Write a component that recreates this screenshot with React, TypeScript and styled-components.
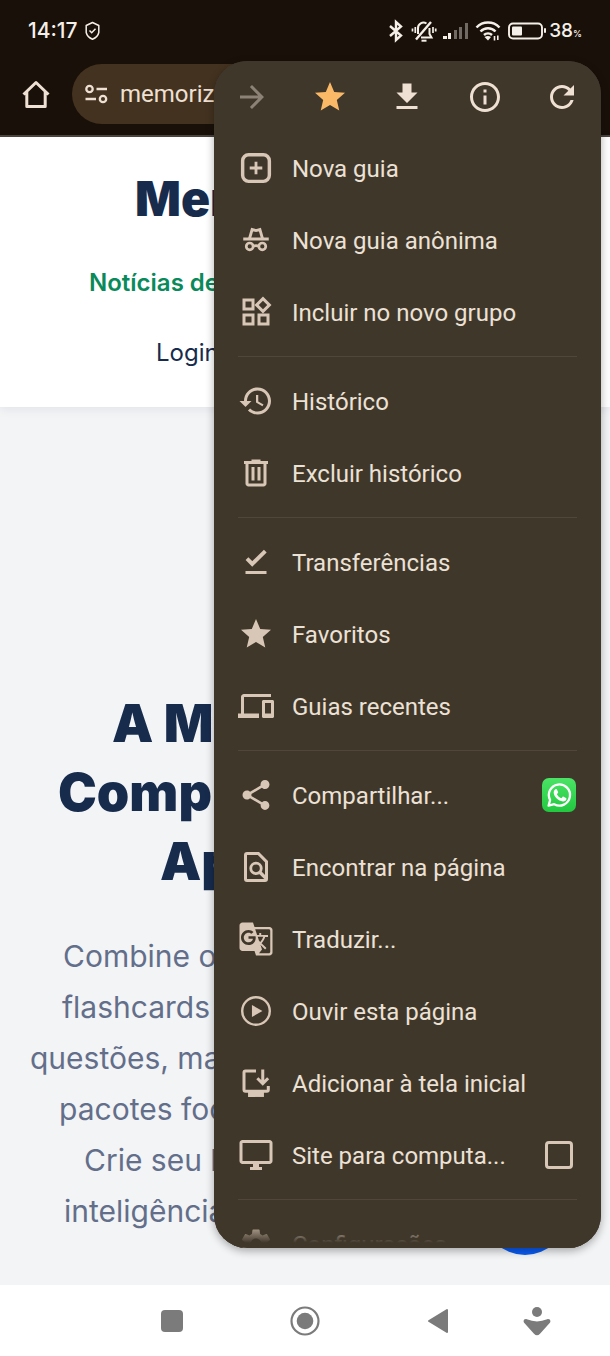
import React from "react";
import styled, { createGlobalStyle } from "styled-components";

const color = {
  chrome: "#191009",
  pill: "#43321f",
  menu: "#40372b",
  menuText: "#ece1d5",
  menuIcon: "#d8c7b6",
  toolIcon: "#eee0d3",
  navy: "#172b4d",
  green: "#0a8a5b",
  slate: "#636f8a",
  page: "#f3f4f6",
  navIcon: "#7b7b7b",
};

const GlobalStyle = createGlobalStyle`
  * { box-sizing: border-box; }
  body { margin: 0; background: #fff; font-family: Inter, "Liberation Sans", sans-serif; }
  button { font: inherit; border: 0; padding: 0; background: none; cursor: pointer; }
  h1, h2, p, ul { margin: 0; padding: 0; list-style: none; }
`;

const Screen = styled.div`
  position: relative;
  display: flex;
  flex-direction: column;
  min-height: 100vh;
  overflow: hidden;
`;

const StatusBar = styled.div`
  display: flex;
  align-items: center;
  justify-content: space-between;
  height: 61px;
  padding: 0 28px;
  background: ${color.chrome};
  color: #f5efe9;
`;

const StatusGroup = styled.div<{ $gap: number }>`
  display: flex;
  align-items: center;
  gap: ${(p) => p.$gap}px;
`;

const Clock = styled.span`
  font-size: 21px;
  font-weight: 500;
`;

const Charge = styled.span`
  font-size: 19px;
  font-weight: 500;
  small { font-size: 9px; }
`;

const BrowserBar = styled.div`
  display: flex;
  align-items: center;
  gap: 18px;
  height: 76px;
  padding: 0 0 8px 18px;
  background: ${color.chrome};
  border-bottom: 2px solid #4b453e;
  color: ${color.toolIcon};
`;

const IconButton = styled.button`
  display: flex;
  align-items: center;
  justify-content: center;
  width: 36px;
  height: 36px;
  color: inherit;
`;

const AddressPill = styled.div`
  display: flex;
  align-items: center;
  gap: 10px;
  flex: 1;
  height: 60px;
  margin-right: 72px;
  padding-left: 10px;
  border-radius: 30px;
  background: ${color.pill};
`;

const Address = styled.input`
  width: 100px;
  padding: 0;
  border: 0;
  outline: 0;
  background: none;
  color: ${color.toolIcon};
  font-family: Roboto, sans-serif;
  font-size: 24px;
`;

const Site = styled.main`
  position: relative;
  flex: 1;
  background: ${color.page};
`;

const SiteHeader = styled.header`
  height: 270px;
  padding-top: 32px;
  background: #fff;
  box-shadow: 0 2px 10px rgba(20, 30, 50, 0.08);
`;

const Line = styled.span<{ $start: number }>`
  display: block;
  padding-left: ${(p) => p.$start}px;
  white-space: nowrap;
`;

const Brand = styled.h1`
  font-size: 48px;
  font-weight: 900;
  line-height: 60px;
  color: ${color.navy};
`;

const SiteLink = styled.a<{ $strong?: boolean }>`
  display: block;
  margin-top: 38px;
  font-size: 24px;
  font-weight: ${(p) => (p.$strong ? 600 : 400)};
  line-height: 32px;
  color: ${(p) => (p.$strong ? color.green : color.navy)};
  text-decoration: none;
`;

const Hero = styled.section`
  padding-top: 282px;
`;

const HeroTitle = styled.h2`
  font-size: 52px;
  font-weight: 900;
  line-height: 69px;
  color: ${color.navy};
`;

const HeroText = styled.p`
  margin-top: 35px;
  font-size: 30px;
  line-height: 51px;
  color: ${color.slate};
`;

const Fab = styled.button`
  position: absolute;
  right: 43px;
  bottom: 30px;
  width: 84px;
  height: 84px;
  border-radius: 50%;
  background: #0b5cf5;
`;

const Menu = styled.div`
  position: absolute;
  top: 61px;
  right: 9px;
  bottom: 108px;
  width: calc(100% - 223px);
  max-width: 387px;
  overflow: hidden;
  border-radius: 33px;
  background: ${color.menu};
  color: ${color.menuText};

  &::after {
    content: "";
    position: absolute;
    inset: auto 0 0 0;
    height: 26px;
    background: linear-gradient(rgba(64, 55, 43, 0), ${color.menu} 80%);
    pointer-events: none;
  }
`;

const MenuShadow = styled(Menu)`
  overflow: visible;
  box-shadow: 0 3px 8px rgba(0, 0, 0, 0.32);
  &::after { display: none; }
`;

const MenuTools = styled.div`
  display: flex;
  align-items: center;
  justify-content: space-between;
  height: 71px;
  padding: 0 21px 0 20px;
`;

const ToolButton = styled(IconButton)<{ $tone: string }>`
  color: ${(p) => p.$tone};
`;

const MenuRow = styled.li`
  display: flex;
  align-items: center;
  height: 72px;
  padding: 0 25px 0 24px;
`;

const MenuAction = styled.button`
  display: flex;
  flex: 1;
  align-items: center;
  gap: 18px;
  height: 100%;
  color: ${color.menuText};
  text-align: left;
`;

const MenuLabel = styled.span`
  padding-top: 1px;
  font-family: Roboto, sans-serif;
  font-size: 24px;
  line-height: 32px;
  white-space: nowrap;
`;

const MenuGlyph = styled.span`
  display: flex;
  color: ${color.menuIcon};
`;

const Divider = styled.li`
  height: 1px;
  margin: 8px 24px;
  background: #50473a;
`;

const Tick = styled.input`
  appearance: none;
  width: 28px;
  height: 28px;
  margin: 0 3px 0 0;
  border: 3px solid ${color.menuIcon};
  border-radius: 4px;
`;

const NavBar = styled.nav`
  display: grid;
  grid-template-columns: repeat(3, 133px) 64px;
  justify-content: center;
  align-items: center;
  height: 71px;
  padding-left: 64px;
  background: #fff;
`;

const NavButton = styled(IconButton)`
  justify-self: center;
  color: ${color.navIcon};
`;

const Glyph = ({ d, size = 36 }: { d: string; size?: number }) => (
  <svg width={size} height={size} viewBox="0 0 24 24" fill="currentColor" aria-hidden="true">
    <path fillRule="evenodd" d={d} />
  </svg>
);

const Sketch = ({ children }: { children: React.ReactNode }) => (
  <svg width="36" height="36" viewBox="0 0 24 24" fill="none" stroke="currentColor" strokeWidth="2" aria-hidden="true">
    {children}
  </svg>
);

const STAR = "M12 17.27L18.18 21l-1.64-7.03L22 9.24l-7.19-.61L12 2 9.19 8.63 2 9.24l5.46 4.73L5.82 21z";

const tools = [
  { label: "Avançar", tone: "#8d8276", d: "M12 4l-1.41 1.41L16.17 11H4v2h12.17l-5.58 5.59L12 20l8-8z" },
  { label: "Favorito", tone: "#f9b966", d: STAR },
  { label: "Baixar", tone: color.toolIcon, d: "M19 9h-4V3H9v6H5l7 7 7-7zM5 18v2h14v-2H5z" },
  {
    label: "Informações",
    tone: color.toolIcon,
    d: "M11 7h2v2h-2zm0 4h2v6h-2zm1-9C6.48 2 2 6.48 2 12s4.48 10 10 10 10-4.48 10-10S17.52 2 12 2zm0 18c-4.41 0-8-3.59-8-8s3.59-8 8-8 8 3.59 8 8-3.59 8-8 8z",
  },
  {
    label: "Recarregar",
    tone: color.toolIcon,
    d: "M17.65 6.35C16.2 4.9 14.21 4 12 4c-4.42 0-7.99 3.58-7.99 8s3.57 8 7.99 8c3.73 0 6.84-2.55 7.73-6h-2.08c-.82 2.33-3.04 4-5.65 4-3.31 0-6-2.69-6-6s2.69-6 6-6c1.66 0 3.14.69 4.22 1.78L13 11h7V4l-2.35 2.35z",
  },
];

const WhatsApp = () => (
  <svg width="34" height="34" viewBox="0 0 34 34" role="img" aria-label="WhatsApp">
    <defs>
      <linearGradient id="wa" x1="0" y1="0" x2="0" y2="1">
        <stop offset="0" stopColor="#4be366" />
        <stop offset="1" stopColor="#22c840" />
      </linearGradient>
    </defs>
    <rect width="34" height="34" rx="7" fill="url(#wa)" />
    <path d="M6.6 27.6l1.5-5.6A10.6 10.6 0 1 1 12.2 26.2z" fill="none" stroke="#fff" strokeWidth="2.3" strokeLinejoin="round" />
    <path
      d="M13.3 11.3c.5-.5 1.3-.5 1.6.1l1.2 2.5c.2.5 0 .9-.3 1.2l-.9 1.1c1 1.9 2.4 3.2 4.4 4.1l1.2-1.4c.3-.4.7-.4 1.1-.2l2.4 1.2c.5.3.6.7.4 1.3-.5 1.5-2 2.3-3.5 2.2-4.7-.7-8.6-4.3-9.2-8.5-.1-1.5.6-2.7 1.6-3.6z"
      fill="#fff"
    />
  </svg>
);

type Item = { label: string; icon: React.ReactNode; side?: React.ReactNode };

const groups: Item[][] = [
  [
    {
      label: "Nova guia",
      icon: (
        <Sketch>
          <rect x="3.1" y="3.1" width="17.8" height="17.8" rx="4" strokeWidth="2.3" />
          <path d="M12 7.8v8.400M7.800 12h8.400" strokeWidth="1.9" />
        </Sketch>
      ),
    },
    {
      label: "Nova guia anônima",
      icon: (
        <Sketch>
          <path d="M3.500 11.300h17" strokeWidth="1.900" />
          <path d="M7.700 11l1.700-6 2.600.7 2.600-.7 1.700 6" strokeWidth="1.900" />
          <circle cx="7.800" cy="16.300" r="2.300" strokeWidth="1.800" />
          <circle cx="16.200" cy="16.300" r="2.300" strokeWidth="1.800" />
          <path d="M10 16.200q2-1 4 0" strokeWidth="1.800" />
        </Sketch>
      ),
    },
    {
      label: "Incluir no novo grupo",
      icon: (
        <Glyph d="M16.660 4.520l2.830 2.830-2.830 2.830-2.830-2.830 2.830-2.830M9 5v4H5V5h4m10 10v4h-4v-4h4M9 15v4H5v-4h4m7.660-13.310L11 7.340 16.660 13l5.660-5.660-5.660-5.650zM11 3H3v8h8V3zm10 10h-8v8h8v-8zm-10 0H3v8h8v-8z" />
      ),
    },
  ],
  [
    {
      label: "Histórico",
      icon: (
        <Glyph d="M13 3c-4.970 0-9 4.030-9 9H1l3.890 3.890.07.14L9 12H6c0-3.870 3.130-7 7-7s7 3.130 7 7-3.130 7-7 7c-1.930 0-3.680-.79-4.940-2.060l-1.420 1.420C8.270 19.990 10.510 21 13 21c4.970 0 9-4.030 9-9s-4.030-9-9-9zm-1 5v5l4.280 2.540.72-1.210-3.500-2.080V8H12z" />
      ),
    },
    {
      label: "Excluir histórico",
      icon: (
        <Glyph d="M15 4V3H9v1H4v2h1v13c0 1.100.9 2 2 2h10c1.100 0 2-.9 2-2V6h1V4h-5zm2 15H7V6h10v13zM9 8h2v9H9zm4 0h2v9h-2z" />
      ),
    },
  ],
  [
    {
      label: "Transferências",
      icon: (
        <Sketch>
          <path d="M6 9.800l3.500 3.500L18.200 4.800" strokeWidth="2.600" />
          <path d="M5 19h14" />
        </Sketch>
      ),
    },
    { label: "Favoritos", icon: <Glyph d={STAR} /> },
    {
      label: "Guias recentes",
      icon: (
        <Glyph d="M4 6h18V4H4c-1.100 0-2 .9-2 2v11H0v3h14v-3H4V6zm19 2h-6c-.55 0-1 .45-1 1v10c0 .55.45 1 1 1h6c.55 0 1-.45 1-1V9c0-.55-.45-1-1-1zm-1 9h-4v-7h4v7z" />
      ),
    },
  ],
  [
    {
      label: "Compartilhar...",
      icon: (
        <Glyph d="M18 16.080c-.76 0-1.440.3-1.960.77L8.910 12.700c.05-.23.09-.46.09-.7s-.04-.47-.09-.7l7.050-4.110c.54.5 1.250.81 2.040.81 1.660 0 3-1.340 3-3s-1.340-3-3-3-3 1.340-3 3c0 .24.04.47.09.7L8.040 9.810C7.500 9.310 6.790 9 6 9c-1.660 0-3 1.340-3 3s1.340 3 3 3c.79 0 1.500-.31 2.040-.81l7.120 4.160c-.05.21-.08.43-.08.65 0 1.610 1.310 2.920 2.920 2.920s2.920-1.310 2.920-2.920-1.310-2.920-2.920-2.920z" />
      ),
      side: <WhatsApp />,
    },
    {
      label: "Encontrar na página",
      icon: (
        <Sketch>
          <path d="M5 4a1 1 0 0 1 1-1h7.600L19 8.400V20a1 1 0 0 1-1 1H6a1 1 0 0 1-1-1z" />
          <circle cx="12" cy="12.900" r="3.500" strokeWidth="1.900" />
          <path d="M14.400 15.300l4.300 4.300" strokeWidth="2.300" />
        </Sketch>
      ),
    },
    {
      label: "Traduzir...",
      icon: (
        <Glyph d="M21 4H11l-1-3H3c-1.100 0-2 .9-2 2v15c0 1.100.9 2 2 2h8l1 3h9c1.100 0 2-.9 2-2V6c0-1.100-.9-2-2-2zM7 16c-2.760 0-5-2.240-5-5s2.240-5 5-5c1.350 0 2.480.5 3.350 1.300L9.030 8.570c-.38-.36-1.040-.78-2.030-.78-1.740 0-3.150 1.440-3.150 3.210S5.260 14.210 7 14.210c2.010 0 2.840-1.440 2.920-2.410H7v-1.710h4.680c.07.31.12.61.12 1.020C11.800 13.970 9.890 16 7 16zm6.170-5.420h3.700c-.43 1.250-1.110 2.430-2.050 3.470-.31-.35-.6-.72-.86-1.100l-.79-2.370zm8.330 9.920c0 .55-.45 1-1 1H14l2-2.500-1.040-3.100 3.100 3.100.92-.92-3.300-3.250.02-.02c1.130-1.250 1.930-2.690 2.400-4.220H20v-1.300h-4.530V8h-1.290v1.290h-1.440L11.460 5.500h9.040c.55 0 1 .45 1 1v14z" />
      ),
    },
    {
      label: "Ouvir esta página",
      icon: (
        <Sketch>
          <circle cx="12" cy="12" r="9.200" strokeWidth="1.600" />
          <path d="M9.300 8v8l7-4z" fill="currentColor" stroke="none" />
        </Sketch>
      ),
    },
    {
      label: "Adicionar à tela inicial",
      icon: (
        <Sketch>
          <path d="M12 4H5a1 1 0 0 0-1 1v11.500a1 1 0 0 0 1 1h14.200a1 1 0 0 0 1-1V14" />
          <path d="M6.700 18h10.600v3.300H6.700z" fill="currentColor" stroke="none" />
          <path d="M16.500 3v9.300M12.900 8.800l3.600 3.600 3.600-3.600" />
        </Sketch>
      ),
    },
    {
      label: "Site para computa...",
      icon: (
        <Glyph d="M21 2H3c-1.100 0-2 .9-2 2v12c0 1.100.9 2 2 2h7v2H8v2h8v-2h-2v-2h7c1.100 0 2-.9 2-2V4c0-1.100-.9-2-2-2zm0 14H3V4h18v12z" />
      ),
      side: <Tick type="checkbox" aria-label="Site para computador" />,
    },
  ],
  [
    {
      label: "Configurações",
      icon: (
        <Glyph d="M19.140 12.940c.04-.3.06-.61.06-.94 0-.32-.02-.64-.07-.94l2.030-1.580c.18-.14.23-.41.12-.61l-1.920-3.320c-.12-.22-.37-.29-.59-.22l-2.390.96c-.5-.38-1.030-.7-1.620-.94l-.36-2.540c-.04-.24-.24-.41-.48-.41h-3.840c-.24 0-.43.17-.47.41l-.36 2.540c-.59.24-1.130.57-1.620.94l-2.390-.96c-.22-.08-.47 0-.59.22L2.740 8.870c-.12.21-.08.47.12.61l2.030 1.580c-.05.3-.09.63-.09.94s.02.64.07.94l-2.030 1.580c-.18.14-.23.41-.12.61l1.920 3.320c.12.22.37.29.59.22l2.390-.96c.5.38 1.030.7 1.620.94l.36 2.540c.05.24.24.41.48.41h3.840c.24 0 .44-.17.47-.41l.36-2.540c.59-.24 1.130-.56 1.620-.94l2.390.96c.22.08.47 0 .59-.22l1.920-3.320c.12-.22.07-.47-.12-.61l-2.010-1.580zM12 15.600c-1.980 0-3.600-1.620-3.600-3.600s1.620-3.600 3.600-3.600 3.600 1.620 3.600 3.600-1.620 3.600-3.600 3.600z" />
      ),
    },
  ],
];

const StatusIcons = () => (
  <>
    <svg width="20" height="24" viewBox="0 0 20 24" fill="none" stroke="currentColor" strokeWidth="2.400">
      <path d="M2 7l11 9.500L8 21V3l5 4.500L2 17" />
    </svg>
    <svg width="28" height="24" viewBox="0 0 28 24" fill="none" stroke="currentColor" strokeWidth="2">
      <path d="M20 3L5 20.500" strokeWidth="2.400" />
      <path d="M7 15V9.500A5.500 5.500 0 0 1 15.500 4.500M18.500 9v6l2 3.500H10" />
      <path d="M10.500 21.700h5" />
      <path d="M4.300 8v6M1.500 9.500v3M22 8v6M24.700 9.500v3" strokeWidth="1.700" />
    </svg>
    <svg width="30" height="20" viewBox="0 0 30 20" fill="currentColor">
      <rect x="1" y="15" width="4" height="3" />
      <rect x="6" y="12" width="3" height="6" />
      <g opacity=".4">
        <rect x="12" y="9" width="3" height="9" />
        <rect x="17" y="6" width="3" height="12" />
        <rect x="23" y="2" width="3" height="16" />
      </g>
    </svg>
    <svg width="30" height="22" viewBox="0 0 30 22" fill="none" stroke="currentColor" strokeWidth="2.500">
      <path d="M1.500 7.500a16 16 0 0 1 23 0M5.500 11.500a10.500 10.500 0 0 1 15 0M9 15a6 6 0 0 1 8 0" />
      <path d="M9.500 17l3.500 3.500 3-3.500q-3-2-6.500 0z" fill="currentColor" stroke="none" />
      <path d="M19.500 16v4.500M22.800 15.500v4.500" strokeWidth="1.600" />
    </svg>
    <svg width="38" height="18" viewBox="0 0 38 18" fill="currentColor">
      <rect x="1" y="1.500" width="33" height="15" rx="4" fill="none" stroke="currentColor" strokeWidth="1.900" />
      <rect x="4" y="4.500" width="10" height="9" rx="1" />
      <rect x="36" y="6" width="2" height="5" rx="1" />
    </svg>
  </>
);

export default function App() {
  return (
    <Screen>
      <GlobalStyle />
      <StatusBar>
        <StatusGroup $gap={6}>
          <Clock>14:17</Clock>
          <svg width="17" height="20" viewBox="0 0 17 20" fill="none" stroke="currentColor" strokeWidth="1.500">
            <path d="M8.500 1.500l6.300 3v7q-1 4.500-6.300 6.800-5.300-2.300-6.300-6.800v-7z" strokeLinejoin="round" />
            <path d="M5.500 9.500l2.200 2.200 3.800-4" />
          </svg>
        </StatusGroup>
        <StatusGroup $gap={3}>
          <StatusIcons />
          <Charge>
            38<small>%</small>
          </Charge>
        </StatusGroup>
      </StatusBar>

      <BrowserBar>
        <IconButton aria-label="Página inicial">
          <svg width="30" height="30" viewBox="0 0 30 30" fill="none" stroke="currentColor" strokeWidth="3">
            <path d="M2.500 15.500L15 3.500l12.500 12M5.800 13v14.500h18.400V13" strokeLinejoin="round" />
          </svg>
        </IconButton>
        <AddressPill>
          <svg width="28" height="24" viewBox="0 0 28 24" fill="none" stroke="currentColor" strokeWidth="2.300">
            <circle cx="7.500" cy="7" r="3.200" />
            <path d="M14.500 7H25M3.500 17H14" />
            <circle cx="21" cy="17" r="3.200" />
          </svg>
          <Address aria-label="Endereço" defaultValue="memoriz" />
        </AddressPill>
      </BrowserBar>

      <Site>
        <SiteHeader>
          <Brand>
            <Line $start={135}>Mem</Line>
          </Brand>
          <SiteLink href="#noticias" $strong>
            <Line $start={89}>Notícias de</Line>
          </SiteLink>
          <SiteLink href="#login">
            <Line $start={156}>Login</Line>
          </SiteLink>
        </SiteHeader>
        <Hero>
          <HeroTitle>
            <Line $start={112}>A M</Line>
            <Line $start={58}>Comp</Line>
            <Line $start={160}>Ap</Line>
          </HeroTitle>
          <HeroText>
            <Line $start={63}>Combine o</Line>
            <Line $start={62}>flashcards</Line>
            <Line $start={30}>questões, ma</Line>
            <Line $start={59}>pacotes foc</Line>
            <Line $start={84}>Crie seu l</Line>
            <Line $start={64}>inteligência</Line>
          </HeroText>
        </Hero>
        <Fab aria-label="Abrir" />
      </Site>

      <NavBar>
        <NavButton aria-label="Recentes">
          <svg width="22" height="22" viewBox="0 0 22 22" fill="currentColor">
            <rect width="22" height="22" rx="4" />
          </svg>
        </NavButton>
        <NavButton aria-label="Início">
          <svg width="30" height="30" viewBox="0 0 30 30" fill="currentColor">
            <circle cx="15" cy="15" r="13.500" fill="none" stroke="currentColor" strokeWidth="2.200" />
            <circle cx="15" cy="15" r="8.300" />
          </svg>
        </NavButton>
        <NavButton aria-label="Voltar">
          <svg width="22" height="26" viewBox="0 0 22 26" fill="currentColor" stroke="currentColor" strokeWidth="2" strokeLinejoin="round">
            <path d="M2 13L20 2v22z" />
          </svg>
        </NavButton>
        <NavButton aria-label="Acessibilidade">
          <svg width="28" height="30" viewBox="0 0 28 30" fill="currentColor">
            <circle cx="14" cy="6" r="5" />
            <path d="M14 15.500q5-.4 10.200-2.300c2.600-.6 4 1.500 2.700 3.500L17 27.800q-3 3-6 0L1.100 16.700c-1.300-2 .1-4.100 2.700-3.500Q9 15.100 14 15.500z" />
          </svg>
        </NavButton>
      </NavBar>

      <MenuShadow aria-hidden="true" />
      <Menu>
        <MenuTools>
          {tools.map((t) => (
            <ToolButton key={t.label} aria-label={t.label} $tone={t.tone}>
              <Glyph d={t.d} />
            </ToolButton>
          ))}
        </MenuTools>
        <ul>
          {groups.map((group, i) => (
            <React.Fragment key={i}>
              {i > 0 && <Divider role="separator" />}
              {group.map((item) => (
                <MenuRow key={item.label}>
                  <MenuAction>
                    <MenuGlyph>{item.icon}</MenuGlyph>
                    <MenuLabel>{item.label}</MenuLabel>
                  </MenuAction>
                  {item.side}
                </MenuRow>
              ))}
            </React.Fragment>
          ))}
        </ul>
      </Menu>
    </Screen>
  );
}
